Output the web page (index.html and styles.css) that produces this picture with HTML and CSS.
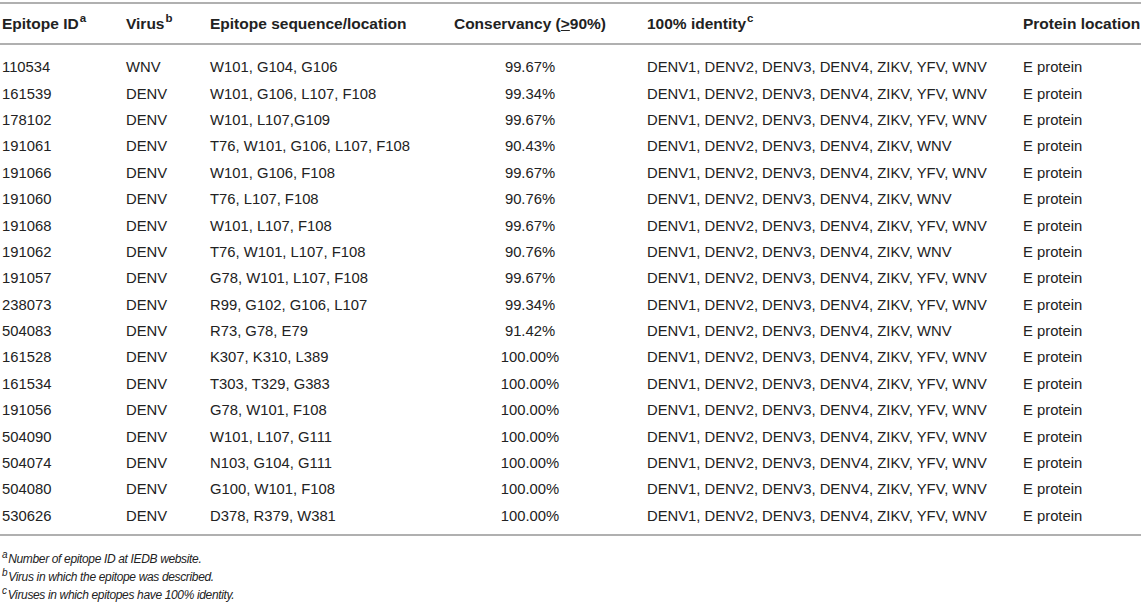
FILE: index.html
```html
<!DOCTYPE html>
<html>
<head>
<meta charset="utf-8">
<link rel="stylesheet" href="styles.css">
</head>
<body>
<div class="wrap">
<table class="tbl">
<thead>
<tr>
<th class="c-id">Epitope ID<sup>a</sup></th>
<th class="c-virus">Virus<sup>b</sup></th>
<th class="c-seq">Epitope sequence/location</th>
<th class="c-cons">Conservancy (<u>&gt;</u>90%)</th>
<th class="c-ident">100% identity<sup>c</sup></th>
<th class="c-prot">Protein location</th>
</tr>
</thead>
<tbody>
<tr class="first"><td>110534</td><td>WNV</td><td>W101, G104, G106</td><td class="num">99.67%</td><td>DENV1, DENV2, DENV3, DENV4, ZIKV, YFV, WNV</td><td>E protein</td></tr>
<tr><td>161539</td><td>DENV</td><td>W101, G106, L107, F108</td><td class="num">99.34%</td><td>DENV1, DENV2, DENV3, DENV4, ZIKV, YFV, WNV</td><td>E protein</td></tr>
<tr><td>178102</td><td>DENV</td><td>W101, L107,G109</td><td class="num">99.67%</td><td>DENV1, DENV2, DENV3, DENV4, ZIKV, YFV, WNV</td><td>E protein</td></tr>
<tr><td>191061</td><td>DENV</td><td>T76, W101, G106, L107, F108</td><td class="num">90.43%</td><td>DENV1, DENV2, DENV3, DENV4, ZIKV, WNV</td><td>E protein</td></tr>
<tr><td>191066</td><td>DENV</td><td>W101, G106, F108</td><td class="num">99.67%</td><td>DENV1, DENV2, DENV3, DENV4, ZIKV, YFV, WNV</td><td>E protein</td></tr>
<tr><td>191060</td><td>DENV</td><td>T76, L107, F108</td><td class="num">90.76%</td><td>DENV1, DENV2, DENV3, DENV4, ZIKV, WNV</td><td>E protein</td></tr>
<tr><td>191068</td><td>DENV</td><td>W101, L107, F108</td><td class="num">99.67%</td><td>DENV1, DENV2, DENV3, DENV4, ZIKV, YFV, WNV</td><td>E protein</td></tr>
<tr><td>191062</td><td>DENV</td><td>T76, W101, L107, F108</td><td class="num">90.76%</td><td>DENV1, DENV2, DENV3, DENV4, ZIKV, WNV</td><td>E protein</td></tr>
<tr><td>191057</td><td>DENV</td><td>G78, W101, L107, F108</td><td class="num">99.67%</td><td>DENV1, DENV2, DENV3, DENV4, ZIKV, YFV, WNV</td><td>E protein</td></tr>
<tr><td>238073</td><td>DENV</td><td>R99, G102, G106, L107</td><td class="num">99.34%</td><td>DENV1, DENV2, DENV3, DENV4, ZIKV, YFV, WNV</td><td>E protein</td></tr>
<tr><td>504083</td><td>DENV</td><td>R73, G78, E79</td><td class="num">91.42%</td><td>DENV1, DENV2, DENV3, DENV4, ZIKV, WNV</td><td>E protein</td></tr>
<tr><td>161528</td><td>DENV</td><td>K307, K310, L389</td><td class="num">100.00%</td><td>DENV1, DENV2, DENV3, DENV4, ZIKV, YFV, WNV</td><td>E protein</td></tr>
<tr><td>161534</td><td>DENV</td><td>T303, T329, G383</td><td class="num">100.00%</td><td>DENV1, DENV2, DENV3, DENV4, ZIKV, YFV, WNV</td><td>E protein</td></tr>
<tr><td>191056</td><td>DENV</td><td>G78, W101, F108</td><td class="num">100.00%</td><td>DENV1, DENV2, DENV3, DENV4, ZIKV, YFV, WNV</td><td>E protein</td></tr>
<tr><td>504090</td><td>DENV</td><td>W101, L107, G111</td><td class="num">100.00%</td><td>DENV1, DENV2, DENV3, DENV4, ZIKV, YFV, WNV</td><td>E protein</td></tr>
<tr><td>504074</td><td>DENV</td><td>N103, G104, G111</td><td class="num">100.00%</td><td>DENV1, DENV2, DENV3, DENV4, ZIKV, YFV, WNV</td><td>E protein</td></tr>
<tr><td>504080</td><td>DENV</td><td>G100, W101, F108</td><td class="num">100.00%</td><td>DENV1, DENV2, DENV3, DENV4, ZIKV, YFV, WNV</td><td>E protein</td></tr>
<tr class="last"><td>530626</td><td>DENV</td><td>D378, R379, W381</td><td class="num">100.00%</td><td>DENV1, DENV2, DENV3, DENV4, ZIKV, YFV, WNV</td><td>E protein</td></tr>
</tbody>
</table>
<div class="notes">
<p><sup>a</sup>Number of epitope ID at IEDB website.</p>
<p><sup>b</sup>Virus in which the epitope was described.</p>
<p><sup>c</sup>Viruses in which epitopes have 100% identity.</p>
</div>
</div>
</body>
</html>
```

FILE: styles.css
```css
html, body {
  margin: 0;
  padding: 0;
  background: #fff;
}
body {
  font-family: "Liberation Sans", Arial, sans-serif;
  color: #222;
}
.wrap {
  width: 1142px;
  padding-top: 2px;
}
.tbl {
  width: 1141px;
  border-collapse: collapse;
  table-layout: fixed;
  border-top: 2px solid #b0b0b0;
  border-bottom: 2px solid #b0b0b0;
}
.tbl th {
  font-weight: bold;
  font-size: 15.5px;
  text-align: left;
  padding: 0 0 0 2px;
  height: 39px;
  border-bottom: 2px solid #b0b0b0;
  white-space: nowrap;
  vertical-align: middle;
}
.tbl th sup {
  font-size: 11.5px;
  font-weight: bold;
  line-height: 0;
  margin-left: 1px;
}
.tbl th u {
  text-decoration: underline;
  text-underline-offset: 1px;
}
.c-id { width: 122px; }
.c-virus { width: 82px; }
.c-seq { width: 205px; }
.c-cons { width: 230px; }
.tbl th.c-cons { text-align: center; padding-left: 0; }
.c-ident { width: 374px; }
.c-prot { width: auto; }
.tbl td {
  font-size: 14.8px;
  padding: 0 0 0 2px;
  height: 26.4px;
  line-height: 16px;
  white-space: nowrap;
  vertical-align: middle;
}
.tbl td.num {
  text-align: center;
  padding-left: 0;
}
.tbl tr.first td { padding-top: 9px; }
.tbl tr.last td { padding-bottom: 5px; }
.notes {
  padding: 14px 0 0 2px;
  font-size: 12px;
  letter-spacing: -0.35px;
  font-style: italic;
  color: #222;
}
.notes p {
  margin: 0;
  line-height: 18px;
}
.notes sup {
  font-size: 10px;
  line-height: 0;
  vertical-align: 5px;
  margin-right: 1px;
}
```
